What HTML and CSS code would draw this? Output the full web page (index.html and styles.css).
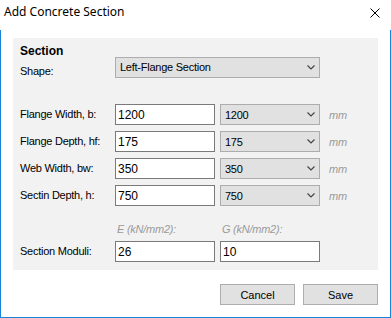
FILE: index.html
```html
<!DOCTYPE html>
<html lang="en">

<head>
    <meta charset="UTF-8">
    <meta name="viewport" content="width=device-width, initial-scale=1.0">
    <title>Add Concrete Section</title>
    <link rel="stylesheet" href="styles.css">
</head>

<body>
    <div class="window">
        <div class="titlebar">
            <span class="title">Add Concrete Section</span>
            <svg class="close" width="10" height="10" viewBox="0 0 10 10">
                <path d="M0.5 0.5 L9.5 9.5 M9.5 0.5 L0.5 9.5" stroke="#000" stroke-width="1" fill="none" />
            </svg>
        </div>
        <div class="client">
            <div class="panel">
                <div class="heading">Section</div>
                <div class="grid shape-row">
                    <span class="label shape-label">Shape:</span>
                    <div class="combo wide">
                        <span>Left-Flange Section</span>
                        <svg width="8" height="5" viewBox="0 0 8 5"><polyline points="0.5,0.5 4,4 7.5,0.5" fill="none" stroke="#444" stroke-width="1.2" /></svg>
                    </div>
                </div>

                <div class="grid dims">
                    <span class="label">Flange Width, b:</span>
                    <input class="textbox" type="text" value="1200">
                    <div class="combo"><span>1200</span><svg width="8" height="5" viewBox="0 0 8 5"><polyline points="0.5,0.5 4,4 7.5,0.5" fill="none" stroke="#444" stroke-width="1.2" /></svg></div>
                    <span class="unit">mm</span>

                    <span class="label">Flange Depth, hf:</span>
                    <input class="textbox" type="text" value="175">
                    <div class="combo"><span>175</span><svg width="8" height="5" viewBox="0 0 8 5"><polyline points="0.5,0.5 4,4 7.5,0.5" fill="none" stroke="#444" stroke-width="1.2" /></svg></div>
                    <span class="unit">mm</span>

                    <span class="label">Web Width, bw:</span>
                    <input class="textbox" type="text" value="350">
                    <div class="combo"><span>350</span><svg width="8" height="5" viewBox="0 0 8 5"><polyline points="0.5,0.5 4,4 7.5,0.5" fill="none" stroke="#444" stroke-width="1.2" /></svg></div>
                    <span class="unit">mm</span>

                    <span class="label">Sectin Depth, h:</span>
                    <input class="textbox" type="text" value="750">
                    <div class="combo"><span>750</span><svg width="8" height="5" viewBox="0 0 8 5"><polyline points="0.5,0.5 4,4 7.5,0.5" fill="none" stroke="#444" stroke-width="1.2" /></svg></div>
                    <span class="unit">mm</span>
                </div>

                <div class="grid moduli">
                    <span></span>
                    <span class="hint">E (kN/mm2):</span>
                    <span class="hint">G (kN/mm2):</span>
                    <span></span>

                    <span class="label">Section Moduli:</span>
                    <input class="textbox" type="text" value="26">
                    <input class="textbox" type="text" value="10">
                    <span></span>
                </div>
            </div>

            <div class="buttons">
                <button class="btn">Cancel</button>
                <button class="btn">Save</button>
            </div>
        </div>
    </div>
</body>

</html>
```

FILE: styles.css
```css
html,
body {
    margin: 0;
    padding: 0;
    background-color: #ffffff;
}

body {
    font-family: "Liberation Sans", Arial, sans-serif;
    font-size: 11px;
    letter-spacing: -0.25px;
    color: #000;
}

.window {
    width: 391px;
    height: 318px;
    display: flex;
    flex-direction: column;
}

.titlebar {
    height: 30px;
    box-sizing: border-box;
    display: flex;
    align-items: flex-start;
    justify-content: space-between;
    padding: 4px 11px 0 4px;
}

.title {
    font-family: "Noto Sans", "Open Sans", sans-serif;
    font-size: 12px;
    line-height: 16px;
    letter-spacing: 0;
}

.close {
    margin-top: 4px;
}

.client {
    flex: 1;
    border: 1px solid #1883d7;
    border-top: none;
    display: flex;
    flex-direction: column;
}

.panel {
    margin: 8px 12px 0 12px;
    background-color: #f2f2f2;
    padding: 9px 0 8px 7px;
}

.heading {
    font-weight: bold;
    font-size: 12px;
    line-height: 9px;
    letter-spacing: 0;
}

.grid {
    display: grid;
    grid-template-columns: 90px 100px 100px auto;
    column-gap: 5px;
    align-items: center;
}

.label {
    white-space: nowrap;
    line-height: 13px;
}

.shape-label {
    align-self: start;
    padding-top: 9px;
}

.combo {
    height: 21px;
    box-sizing: border-box;
    border: 1px solid #adadad;
    background-color: #e1e1e1;
    display: flex;
    align-items: center;
    justify-content: space-between;
    padding: 0 4px 0 4px;
    font-size: 11px;
}

.combo.wide {
    grid-column: span 2;
}

.textbox {
    height: 21px;
    width: 100px;
    box-sizing: border-box;
    border: 1px solid #7a7a7a;
    background-color: #fff;
    margin: 0;
    padding: 0 2px;
    font-family: "Liberation Sans", Arial, sans-serif;
    font-size: 12px;
    letter-spacing: 0;
    color: #000;
    outline: none;
}

.dims {
    margin-top: 26px;
    row-gap: 6px;
}

.unit {
    margin-left: 4px;
    font-style: italic;
    color: #9a9a9a;
}

.moduli {
    margin-top: 17px;
    row-gap: 5px;
}

.hint {
    font-style: italic;
    color: #9a9a9a;
    line-height: 13px;
    padding-left: 2px;
}

.buttons {
    display: flex;
    justify-content: flex-end;
    gap: 8px;
    margin: 14px 12px 0 0;
}

.btn {
    width: 75px;
    height: 21px;
    box-sizing: border-box;
    border: 1px solid #adadad;
    background-color: #e1e1e1;
    font-family: "Liberation Sans", Arial, sans-serif;
    font-size: 11px;
    letter-spacing: 0;
    color: #000;
    padding: 0;
}
```
